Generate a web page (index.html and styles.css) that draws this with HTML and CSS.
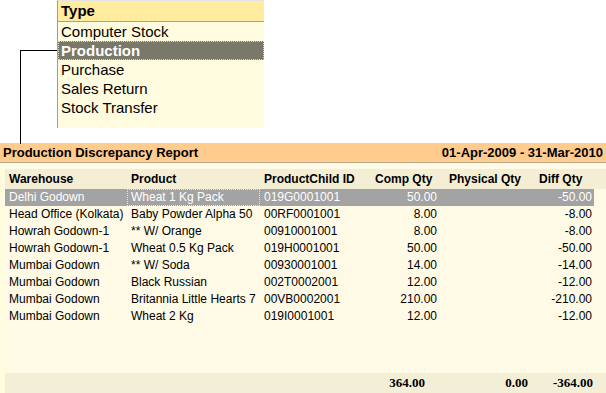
FILE: index.html
```html
<!DOCTYPE html>
<html>
<head>
<meta charset="utf-8">
<link rel="stylesheet" href="styles.css">
</head>
<body>
<div class="top">
  <div class="connector"></div>
  <div class="typebox">
    <div class="type-head">Type</div>
    <div class="type-item">Computer Stock</div>
    <div class="type-item selected">Production</div>
    <div class="type-item">Purchase</div>
    <div class="type-item">Sales Return</div>
    <div class="type-item">Stock Transfer</div>
  </div>
</div>
<div class="report-bar">
  <span>Production Discrepancy Report</span>
  <span>01-Apr-2009 - 31-Mar-2010</span>
</div>
<div class="panel">
  <div class="table">
    <div class="row head">
      <div class="c1">Warehouse</div>
      <div class="c2">Product</div>
      <div class="c3">ProductChild ID</div>
      <div class="c4">Comp Qty</div>
      <div class="c5">Physical Qty</div>
      <div class="c6">Diff Qty</div>
    </div>
    <div class="row data active">
      <div class="c1">Delhi Godown</div>
      <div class="c2 focus">Wheat 1 Kg Pack</div>
      <div class="c3">019G0001001</div>
      <div class="c4">50.00</div>
      <div class="c5"></div>
      <div class="c6">-50.00</div>
    </div>
    <div class="row data">
      <div class="c1">Head Office (Kolkata)</div>
      <div class="c2">Baby Powder Alpha 50</div>
      <div class="c3">00RF0001001</div>
      <div class="c4">8.00</div>
      <div class="c5"></div>
      <div class="c6">-8.00</div>
    </div>
    <div class="row data">
      <div class="c1">Howrah Godown-1</div>
      <div class="c2">** W/ Orange</div>
      <div class="c3">00910001001</div>
      <div class="c4">8.00</div>
      <div class="c5"></div>
      <div class="c6">-8.00</div>
    </div>
    <div class="row data">
      <div class="c1">Howrah Godown-1</div>
      <div class="c2">Wheat 0.5 Kg Pack</div>
      <div class="c3">019H0001001</div>
      <div class="c4">50.00</div>
      <div class="c5"></div>
      <div class="c6">-50.00</div>
    </div>
    <div class="row data">
      <div class="c1">Mumbai Godown</div>
      <div class="c2">** W/ Soda</div>
      <div class="c3">00930001001</div>
      <div class="c4">14.00</div>
      <div class="c5"></div>
      <div class="c6">-14.00</div>
    </div>
    <div class="row data">
      <div class="c1">Mumbai Godown</div>
      <div class="c2">Black Russian</div>
      <div class="c3">002T0002001</div>
      <div class="c4">12.00</div>
      <div class="c5"></div>
      <div class="c6">-12.00</div>
    </div>
    <div class="row data">
      <div class="c1">Mumbai Godown</div>
      <div class="c2">Britannia Little Hearts 7</div>
      <div class="c3">00VB0002001</div>
      <div class="c4">210.00</div>
      <div class="c5"></div>
      <div class="c6">-210.00</div>
    </div>
    <div class="row data">
      <div class="c1">Mumbai Godown</div>
      <div class="c2">Wheat 2 Kg</div>
      <div class="c3">019I0001001</div>
      <div class="c4">12.00</div>
      <div class="c5"></div>
      <div class="c6">-12.00</div>
    </div>
  </div>
  <div class="totals">
    <div class="t4">364.00</div>
    <div class="t5">0.00</div>
    <div class="t6">-364.00</div>
  </div>
</div>
</body>
</html>
```
FILE: styles.css
```css
html, body {
  margin: 0;
  padding: 0;
  background: #ffffff;
  width: 606px;
  height: 393px;
  overflow: hidden;
  font-family: "Liberation Sans", Arial, sans-serif;
  color: #000;
}

.top {
  display: flex;
  height: 143px;
}

.connector {
  margin-left: 20px;
  margin-top: 50px;
  width: 36px;
  height: 93px;
  border-top: 1px solid #000;
  border-left: 1px solid #000;
}

.typebox {
  width: 206px;
  height: 127px;
  border-left: 1px solid #9c9c9c;
  border-top: 1px solid #e4e4e4;
  background: #fffbdf;
}

.type-head {
  height: 20px;
  line-height: 20px;
  background: #ffec9e;
  border-bottom: 1px solid #a8a28a;
  font-weight: bold;
  font-size: 15px;
  padding-left: 3px;
}

.type-item {
  height: 19px;
  line-height: 19px;
  font-size: 15px;
  padding-left: 3px;
}

.type-item.selected {
  background: #7a7869;
  color: #fff;
  font-weight: bold;
  outline: 1px dotted #d8d8d0;
  outline-offset: -1px;
}

.report-bar {
  height: 19px;
  background: #ffcc8e;
  display: flex;
  justify-content: space-between;
  align-items: center;
  padding: 0 3px;
  font-weight: bold;
  font-size: 13px;
  border-bottom: 1px solid #b9ab8e;
}

.panel {
  height: 230px;
  background: #fefae6;
  display: flex;
  flex-direction: column;
  padding-left: 5px;
  box-shadow: inset 5px 0 0 #fffbdf;
}

.table {
  flex: 1;
  padding-top: 6px;
}

.row {
  display: grid;
  grid-template-columns: 122px 133px 110px 71px 82px 71px;
  font-size: 12px;
}

.row.head {
  grid-template-columns: 122px 133px 110px 71px 82px 77px;
  height: 20px;
  line-height: 20px;
  background: #f4eed4;
  font-weight: bold;
}

.row.data {
  height: 17px;
  line-height: 17px;
  width: 589px;
}

.row.active {
  background: #a3a3a3;
  color: #fff;
}

.c1, .c2, .c3 {
  padding-left: 4px;
  white-space: nowrap;
  overflow: hidden;
}

.focus {
  outline: 1px dotted #e8e8e0;
  outline-offset: -1px;
}

.data .c4 {
  text-align: right;
  padding-right: 4px;
}

.data .c6 {
  text-align: right;
  padding-right: 2px;
}

.head .c4 {
  padding-left: 5px;
}

.head .c5 {
  padding-left: 8px;
}

.head .c6 {
  padding-left: 16px;
}

.totals {
  height: 20px;
  background: #f3eed6;
  display: grid;
  grid-template-columns: 350px 70px 103px 65px;
  font-family: "Liberation Serif", "Times New Roman", serif;
  font-weight: bold;
  font-size: 13px;
  line-height: 20px;
}

.t4 {
  grid-column: 2;
  text-align: right;
}

.t5 {
  grid-column: 3;
  text-align: right;
}

.t6 {
  grid-column: 4;
  text-align: right;
  white-space: nowrap;
}
```
